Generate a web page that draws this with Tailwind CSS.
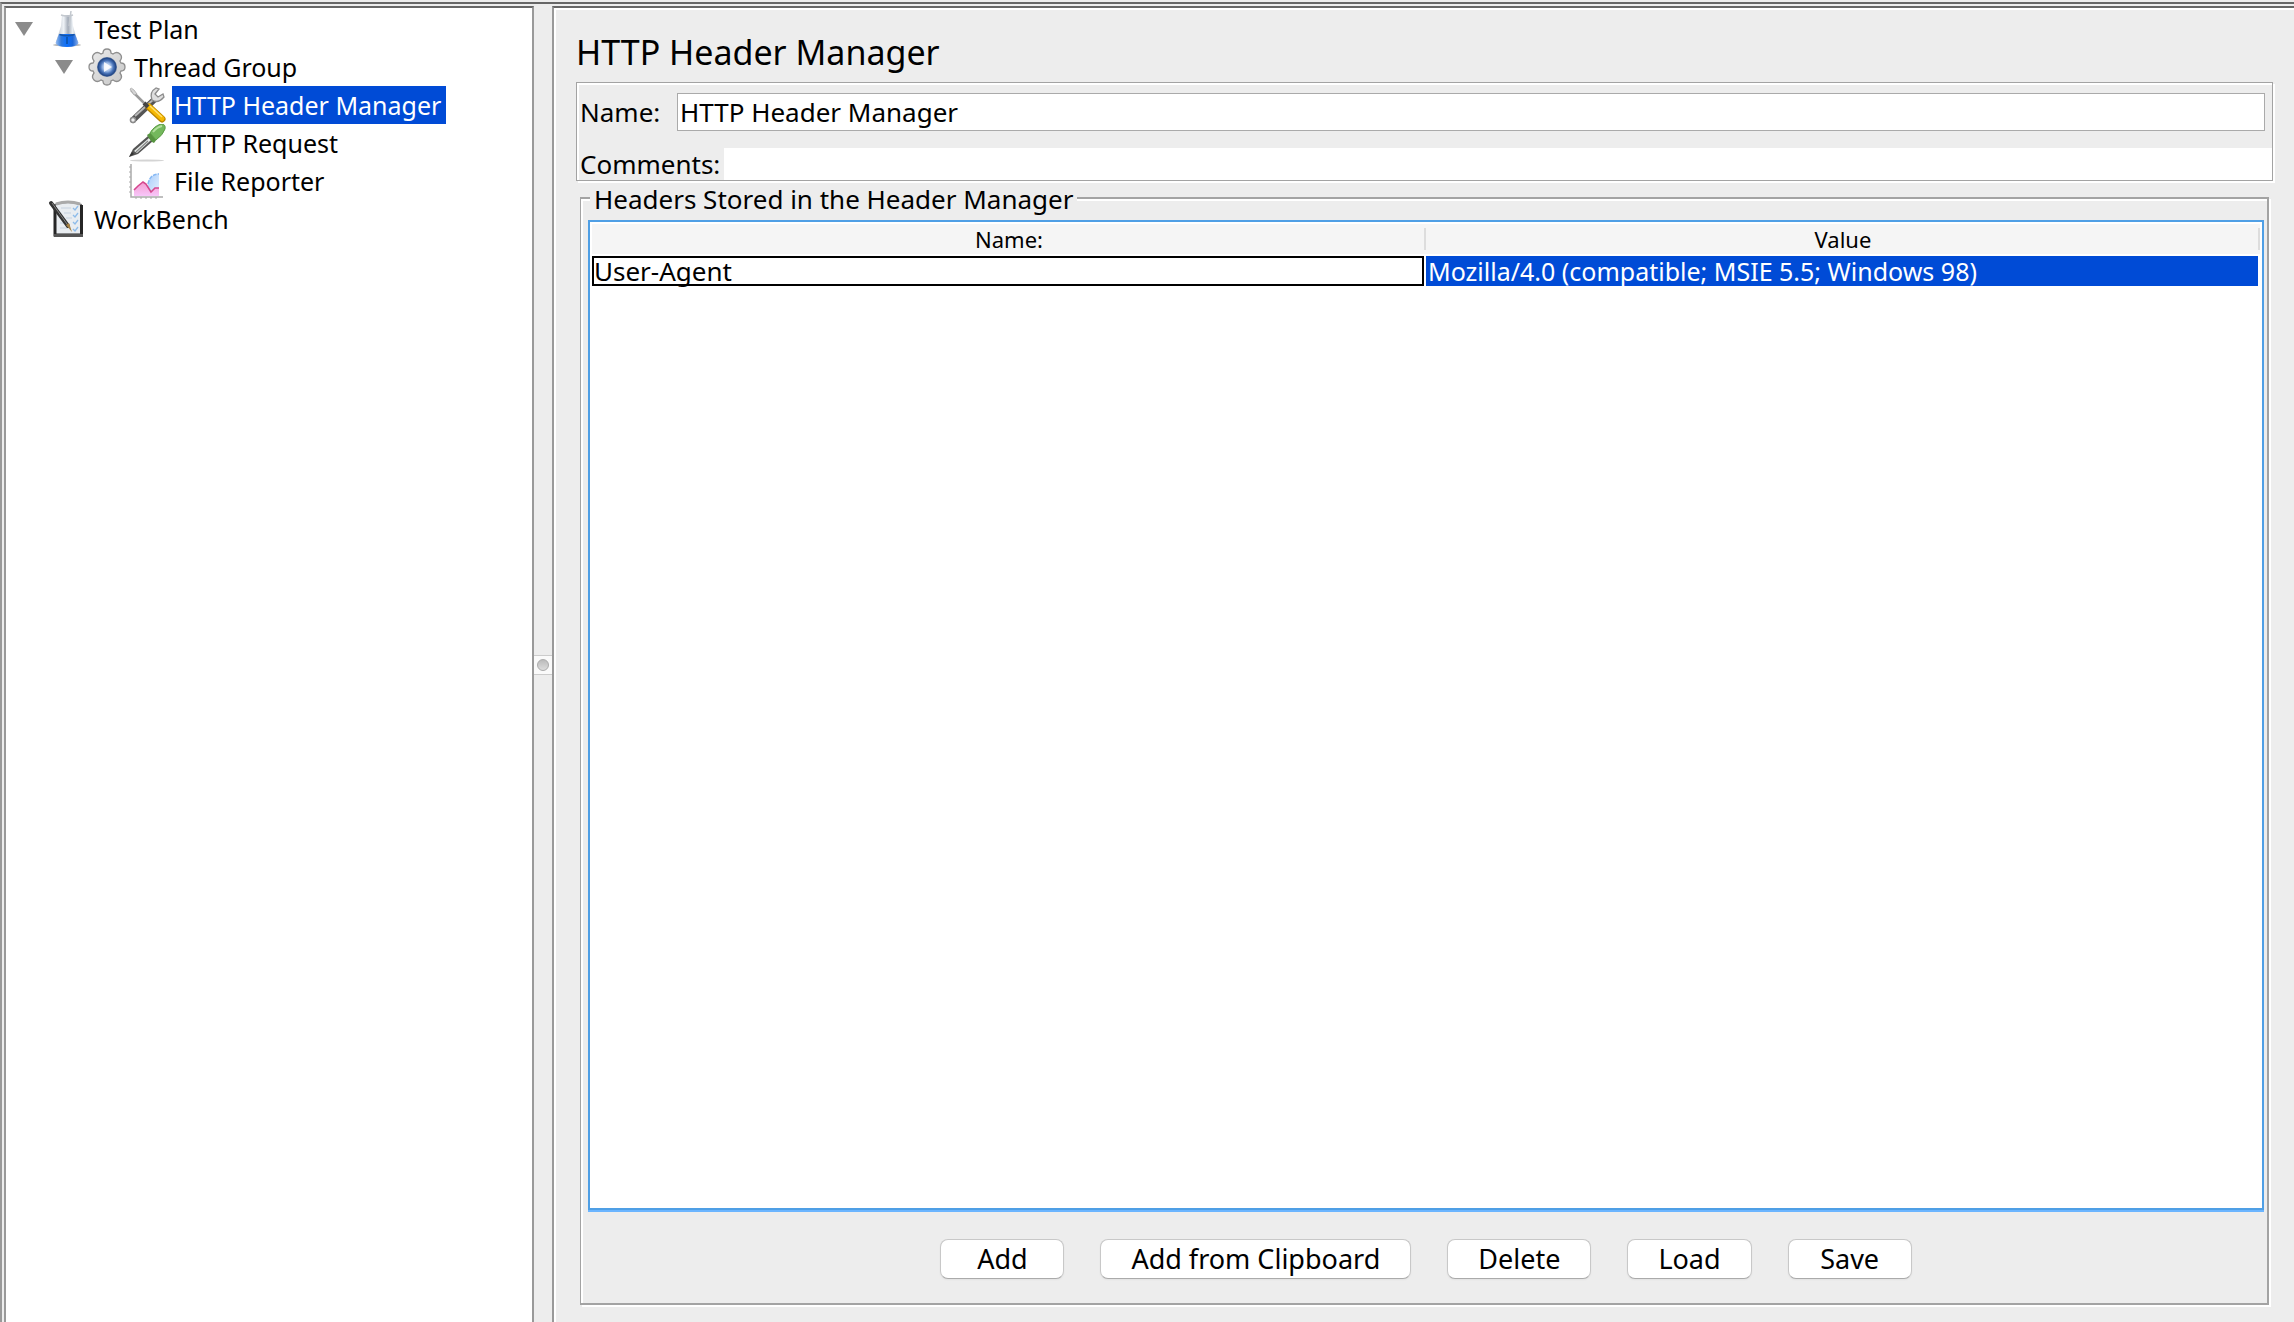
<!DOCTYPE html>
<html lang="en">
<head>
<meta charset="utf-8">
<title>HTTP Header Manager</title>
<script src="https://cdn.jsdelivr.net/npm/@tailwindcss/browser@4"></script>
</head>
<body class="flex h-screen flex-col overflow-hidden bg-[#ededed] pt-[2px] font-['Noto_Sans',sans-serif] text-[26px] text-black">
<div class="flex min-h-0 flex-1 border-t-2 border-l-2 border-t-[#666] border-l-[#999] pt-[2px] pl-[2px]">

  <!-- Tree of test elements -->
  <nav aria-label="Test plan" class="w-[530px] shrink-0 border-x-2 border-t-2 border-x-[#999] border-t-[#666] bg-white pt-[2px] text-[25px] leading-[38px] whitespace-nowrap">
    <ul>
      <li>
        <div class="flex h-[38px] items-center pl-[9px]">
          <svg class="mr-[14px] h-[14px] w-[18px] shrink-0" viewBox="0 0 18 14"><path d="M0 0H18L9 14Z" fill="#8b8b8b"/></svg>
          <svg class="mr-[7px] h-[38px] w-[40px] shrink-0" viewBox="0 0 40 38">
            <defs>
              <linearGradient id="water" x1="0" x2="1"><stop offset="0" stop-color="#9fc0f0"/><stop offset=".25" stop-color="#2e78dc"/><stop offset=".5" stop-color="#0a70ff"/><stop offset=".75" stop-color="#1b66d8"/><stop offset="1" stop-color="#8fb2ea"/></linearGradient>
              <linearGradient id="glass" x1="0" x2="1"><stop offset="0" stop-color="#b8bec6"/><stop offset=".35" stop-color="#eef2f6"/><stop offset=".55" stop-color="#a4acb8"/><stop offset=".75" stop-color="#e8edf2"/><stop offset="1" stop-color="#b8bec6"/></linearGradient>
            </defs>
            <ellipse cx="20" cy="35" rx="14" ry="1.5" fill="#b5b5b5"/>
            <path d="M15 5H25L26 16L31 33Q30 36 26 36H14Q9 36 9 32L14 16Z" fill="url(#glass)"/>
            <path d="M12 24H28L31.500 33Q30 37 20 37Q10 37 8.500 33Z" fill="url(#water)"/>
            <path d="M12.500 24.500Q20 27 27.500 24.500" fill="none" stroke="#1555a8" stroke-width="1.500"/>
            <path d="M14 5Q20 7 26 5M24 1L22 16" fill="none" stroke="#c3c8ce" stroke-width="1.500"/>
            <path d="M20 27V34" stroke="#0b57b8" stroke-width="2"/>
          </svg>
          <span>Test Plan</span>
        </div>
        <ul>
          <li>
            <div class="flex h-[38px] items-center pl-[49px]">
              <svg class="mr-[13px] h-[14px] w-[18px] shrink-0" viewBox="0 0 18 14"><path d="M0 0H18L9 14Z" fill="#8b8b8b"/></svg>
              <svg class="mr-[8px] ml-[2px] h-[38px] w-[38px] shrink-0" viewBox="0 0 38 38">
                <defs>
                  <radialGradient id="hub"><stop offset="0" stop-color="#e3edfc"/><stop offset=".4" stop-color="#a3bfe8"/><stop offset=".65" stop-color="#4a74b8"/><stop offset=".88" stop-color="#234888"/><stop offset="1" stop-color="#5f779f"/></radialGradient>
                  <linearGradient id="steel" x2="1" y2="1"><stop offset="0" stop-color="#ececec"/><stop offset="1" stop-color="#c6c6c6"/></linearGradient>
                </defs>
                <path fill="url(#steel)" stroke="#8f8f8f" stroke-width="1.300" d="M15 5Q15 1 19 1Q23 1 23 5L25 6Q29 3 32 6Q35 9 32 13L33 15Q37 15 37 19Q37 23 33 23L32 25Q35 29 32 32Q29 35 25 32L23 33Q23 37 19 37Q15 37 15 33L13 32Q9 35 6 32Q3 29 6 25L5 23Q1 23 1 19Q1 15 5 15L6 13Q3 9 6 6Q9 3 13 6Z"/>
                <circle cx="19" cy="19" r="10" fill="url(#hub)"/>
                <path d="M16 14L24 19L16 24Z" fill="#fff" opacity=".85"/>
              </svg>
              <span>Thread Group</span>
            </div>
            <ul>
              <li class="flex h-[38px] items-center pl-[122px]">
                <svg class="mr-[6px] h-[38px] w-[38px] shrink-0" viewBox="0 0 38 38">
                  <path d="M3 4L18 19" stroke="#9a9a9a" stroke-width="2.500"/>
                  <path d="M2 3Q3 1 6 4L9 8L6 9Z" fill="#d5d5d5" stroke="#aaa" stroke-width=".8"/>
                  <path d="M5 34L27 13" stroke="#555" stroke-width="6" stroke-linecap="round"/>
                  <path d="M7 30L27 12" stroke="#b8b8b8" stroke-width="2"/>
                  <path d="M28 2Q21 6 24 14Q30 18 36 11L35 8L30 11L27 8L31 3Z" fill="#dedede" stroke="#8b8b8b" stroke-width="1.300"/>
                  <circle cx="5" cy="34" r="2.500" fill="#eee" stroke="#8b8b8b" stroke-width="1.500"/>
                  <path d="M21 21L34 33" stroke="#b98500" stroke-width="7" stroke-linecap="round"/>
                  <path d="M21 20.500L34 32.500" stroke="#f6b800" stroke-width="5" stroke-linecap="round"/>
                  <path d="M22 20L34 31" stroke="#ffe070" stroke-width="1.500"/>
                  <path d="M16 17L20 21" stroke="#444" stroke-width="4"/>
                </svg>
                <span class="h-[38px] w-[274px] bg-[#004bd6] pl-[2px] text-white">HTTP Header Manager</span>
              </li>
              <li class="flex h-[38px] items-center pl-[122px]">
                <svg class="mr-[6px] h-[38px] w-[38px] shrink-0" viewBox="0 0 38 38">
                  <ellipse cx="19" cy="36.500" rx="17" ry="1" fill="#d4d4d4"/>
                  <path d="M1 33L5 25L20 12L25 17L10 30Z" fill="#555"/>
                  <path d="M6 27L21 14L23 16L9 29Z" fill="#e6ebe8"/>
                  <path d="M8 28L20 17" stroke="#868686" stroke-width="1.200"/>
                  <path d="M1 33L4 28L6 30Z" fill="#333"/>
                  <path d="M19 11L22 9L29 15L26 19Q23 18 19 11Z" fill="#56943f"/>
                  <path d="M22 9Q26 2 33 0Q38 0 37 5Q35 11 28 16Z" fill="#74b85c" stroke="#5b9b45" stroke-width="1"/>
                  <path d="M25 8Q29 3 34 2" fill="none" stroke="#b5e09f" stroke-width="2"/>
                </svg>
                <span class="pl-[2px]">HTTP Request</span>
              </li>
              <li class="flex h-[38px] items-center pl-[122px]">
                <svg class="mr-[6px] h-[38px] w-[38px] shrink-0" viewBox="0 0 38 38">
                  <defs>
                    <linearGradient id="sky" x2="1" y2="1"><stop offset="0" stop-color="#a9cdfa"/><stop offset="1" stop-color="#e5f1ff"/></linearGradient>
                    <linearGradient id="rose" y2="1" x2="0"><stop offset="0" stop-color="#f49ccf"/><stop offset="1" stop-color="#f8c6fa"/></linearGradient>
                  </defs>
                  <path d="M3 2V35H35" fill="none" stroke="#aaa" stroke-width="1.500"/>
                  <path d="M1 5H3M1 10H3M1 15H3M1 20H3M1 25H3M1 30H3M8 35V37M13 35V37M18 35V37M23 35V37M28 35V37" stroke="#aaa"/>
                  <path d="M20 25Q20 13 31 12V32H20Z" fill="url(#sky)"/>
                  <path d="M20 22Q22 12 31 12" fill="none" stroke="#86b8f4" stroke-width="1.500" stroke-dasharray="4 1"/>
                  <path d="M6 34V27L10 24L15 20L18 22L23 30L28 26H31V34Z" fill="url(#rose)"/>
                  <path d="M6 28L10 24L15 20L18 22L23 30L27 26H31" fill="none" stroke="#d5478e" stroke-width="1.600"/>
                </svg>
                <span class="pl-[2px]">File Reporter</span>
              </li>
            </ul>
          </li>
        </ul>
      </li>
      <li class="flex h-[38px] items-center pl-[42px]">
        <svg class="mr-[8px] h-[38px] w-[38px] shrink-0" viewBox="0 0 38 38">
          <path d="M6 4Q20 -1 34 4L35 37H6Z" fill="#777"/>
          <path d="M8 5Q20 1 32 5V34H8Z" fill="#e9edf1"/>
          <path d="M7 7V35H33.500V5" fill="none" stroke="#262626" stroke-width="3"/>
          <path d="M6 35.500H35" stroke="#555" stroke-width="3"/>
          <path d="M8 4Q20 0 32 4" fill="none" stroke="#aaa" stroke-width="3"/>
          <path d="M13 8H23M16 13H23M18 18H24M12 23H18M12 28H20" stroke="#c5d2df" stroke-width="1.200"/>
          <path d="M25 8L27 10L30 6M25 15L27 17L30 13M25 22L27 24L30 20M25 29L27 31L30 27" fill="none" stroke="#8ebcea" stroke-width="1.300"/>
          <path d="M3 3L20 26" stroke="#333" stroke-width="4" stroke-linecap="round"/>
          <path d="M4 3L19 24" stroke="#858585" stroke-width="1"/>
          <path d="M18 25L21 23L24 32Z" fill="#a58145"/>
        </svg>
        <span>WorkBench</span>
      </li>
    </ul>
  </nav>

  <!-- Split pane divider -->
  <div role="separator" aria-orientation="vertical" class="flex w-[18px] shrink-0 flex-col justify-center pt-[2px]">
    <div class="flex h-[20px] items-center justify-center border-y border-[#ccc] bg-[#fafafa]">
      <div class="size-3 rounded-full border border-[#aaa] bg-linear-to-b from-[#bbb] to-[#ddd]"></div>
    </div>
  </div>

  <!-- Editor of the selected element -->
  <main class="flex min-w-0 flex-1 flex-col border-t-2 border-l-2 border-t-[#666] border-l-[#999] pr-[21px] pb-[17px] pl-[22px] shadow-[inset_2px_2px_0_#fff]">
    <h1 class="pt-[14px] text-[34px] leading-[60px]">HTTP Header Manager</h1>

    <form class="flex min-h-0 flex-1 flex-col">
      <div class="flex flex-col gap-[17px] border border-[#a3a3a3] pt-[10px] shadow-[inset_2px_2px_0_#fff,2px_2px_0_#fff]">
        <div class="flex h-[38px] items-center pr-[7px]">
          <label for="name" class="w-[100px] shrink-0 pl-[3px]">Name:</label>
          <input id="name" type="text" value="HTTP Header Manager" class="h-[38px] min-w-0 flex-1 border border-[#aaa] bg-white px-[2px] outline-none">
        </div>
        <div class="flex h-[32px] items-center">
          <label for="comments" class="w-[147px] shrink-0 pl-[3px] leading-[32px]">Comments:</label>
          <input id="comments" type="text" class="h-[32px] min-w-0 flex-1 bg-white px-[2px] outline-none">
        </div>
      </div>

      <fieldset class="mx-[4px] mt-[2px] flex min-h-0 min-w-0 flex-1 flex-col border-2 border-l border-[#a3a3a3] pr-[3px] pl-[7px] shadow-[inset_2px_2px_0_#fff,2px_2px_0_#fff]">
        <legend class="ml-[2px] bg-[#ededed] px-[4px] pt-[2px] leading-[28px]">Headers Stored in the Header Manager</legend>

        <div class="mt-[7px] min-h-0 flex-1 border-2 border-[#4f9fe5] bg-white p-[2px] shadow-[0_2px_0_#6bb5ff]">
          <table class="w-full table-fixed border-separate border-spacing-0">
            <thead>
              <tr class="h-[32px]">
                <th scope="col" class="p-0 pb-[2px] font-normal">
                  <div class="flex h-[30px] items-center bg-[#f5f5f5]"><span class="flex-1 pl-[2px] text-[22px] leading-[22px]">Name:</span><span class="h-[22px] w-[2px] bg-[#ddd]"></span></div>
                </th>
                <th scope="col" class="p-0 pb-[2px] font-normal">
                  <div class="flex h-[30px] items-center bg-[#f5f5f5]"><span class="flex-1 pl-[2px] text-[22px] leading-[22px]">Value</span><span class="h-[22px] w-[2px] bg-[#ddd]"></span></div>
                </th>
              </tr>
            </thead>
            <tbody>
              <tr>
                <td class="p-0 pr-[2px]"><div class="h-[30px] border-2 border-black leading-[26px]">User-Agent</div></td>
                <td class="p-0 pr-[2px]"><div class="h-[30px] bg-[#004bd6] pl-[2px] text-[25px] leading-[30px] text-white">Mozilla/4.0 (compatible; MSIE 5.5; Windows 98)</div></td>
              </tr>
            </tbody>
          </table>
        </div>

        <div class="flex justify-center gap-[36px] pt-[29px] pb-[24px] text-[27px]">
          <button type="button" class="h-[40px] min-w-[124px] rounded-lg border border-[#c8c8c8] border-b-[#aaa] bg-white px-[30px] leading-[34px] shadow-xs">Add</button>
          <button type="button" class="h-[40px] min-w-[124px] rounded-lg border border-[#c8c8c8] border-b-[#aaa] bg-white px-[30px] leading-[34px] shadow-xs">Add from Clipboard</button>
          <button type="button" class="h-[40px] min-w-[124px] rounded-lg border border-[#c8c8c8] border-b-[#aaa] bg-white px-[30px] leading-[34px] shadow-xs">Delete</button>
          <button type="button" class="h-[40px] min-w-[124px] rounded-lg border border-[#c8c8c8] border-b-[#aaa] bg-white px-[30px] leading-[34px] shadow-xs">Load</button>
          <button type="button" class="h-[40px] min-w-[124px] rounded-lg border border-[#c8c8c8] border-b-[#aaa] bg-white px-[30px] leading-[34px] shadow-xs">Save</button>
        </div>
      </fieldset>
    </form>
  </main>
</div>
</body>
</html>
